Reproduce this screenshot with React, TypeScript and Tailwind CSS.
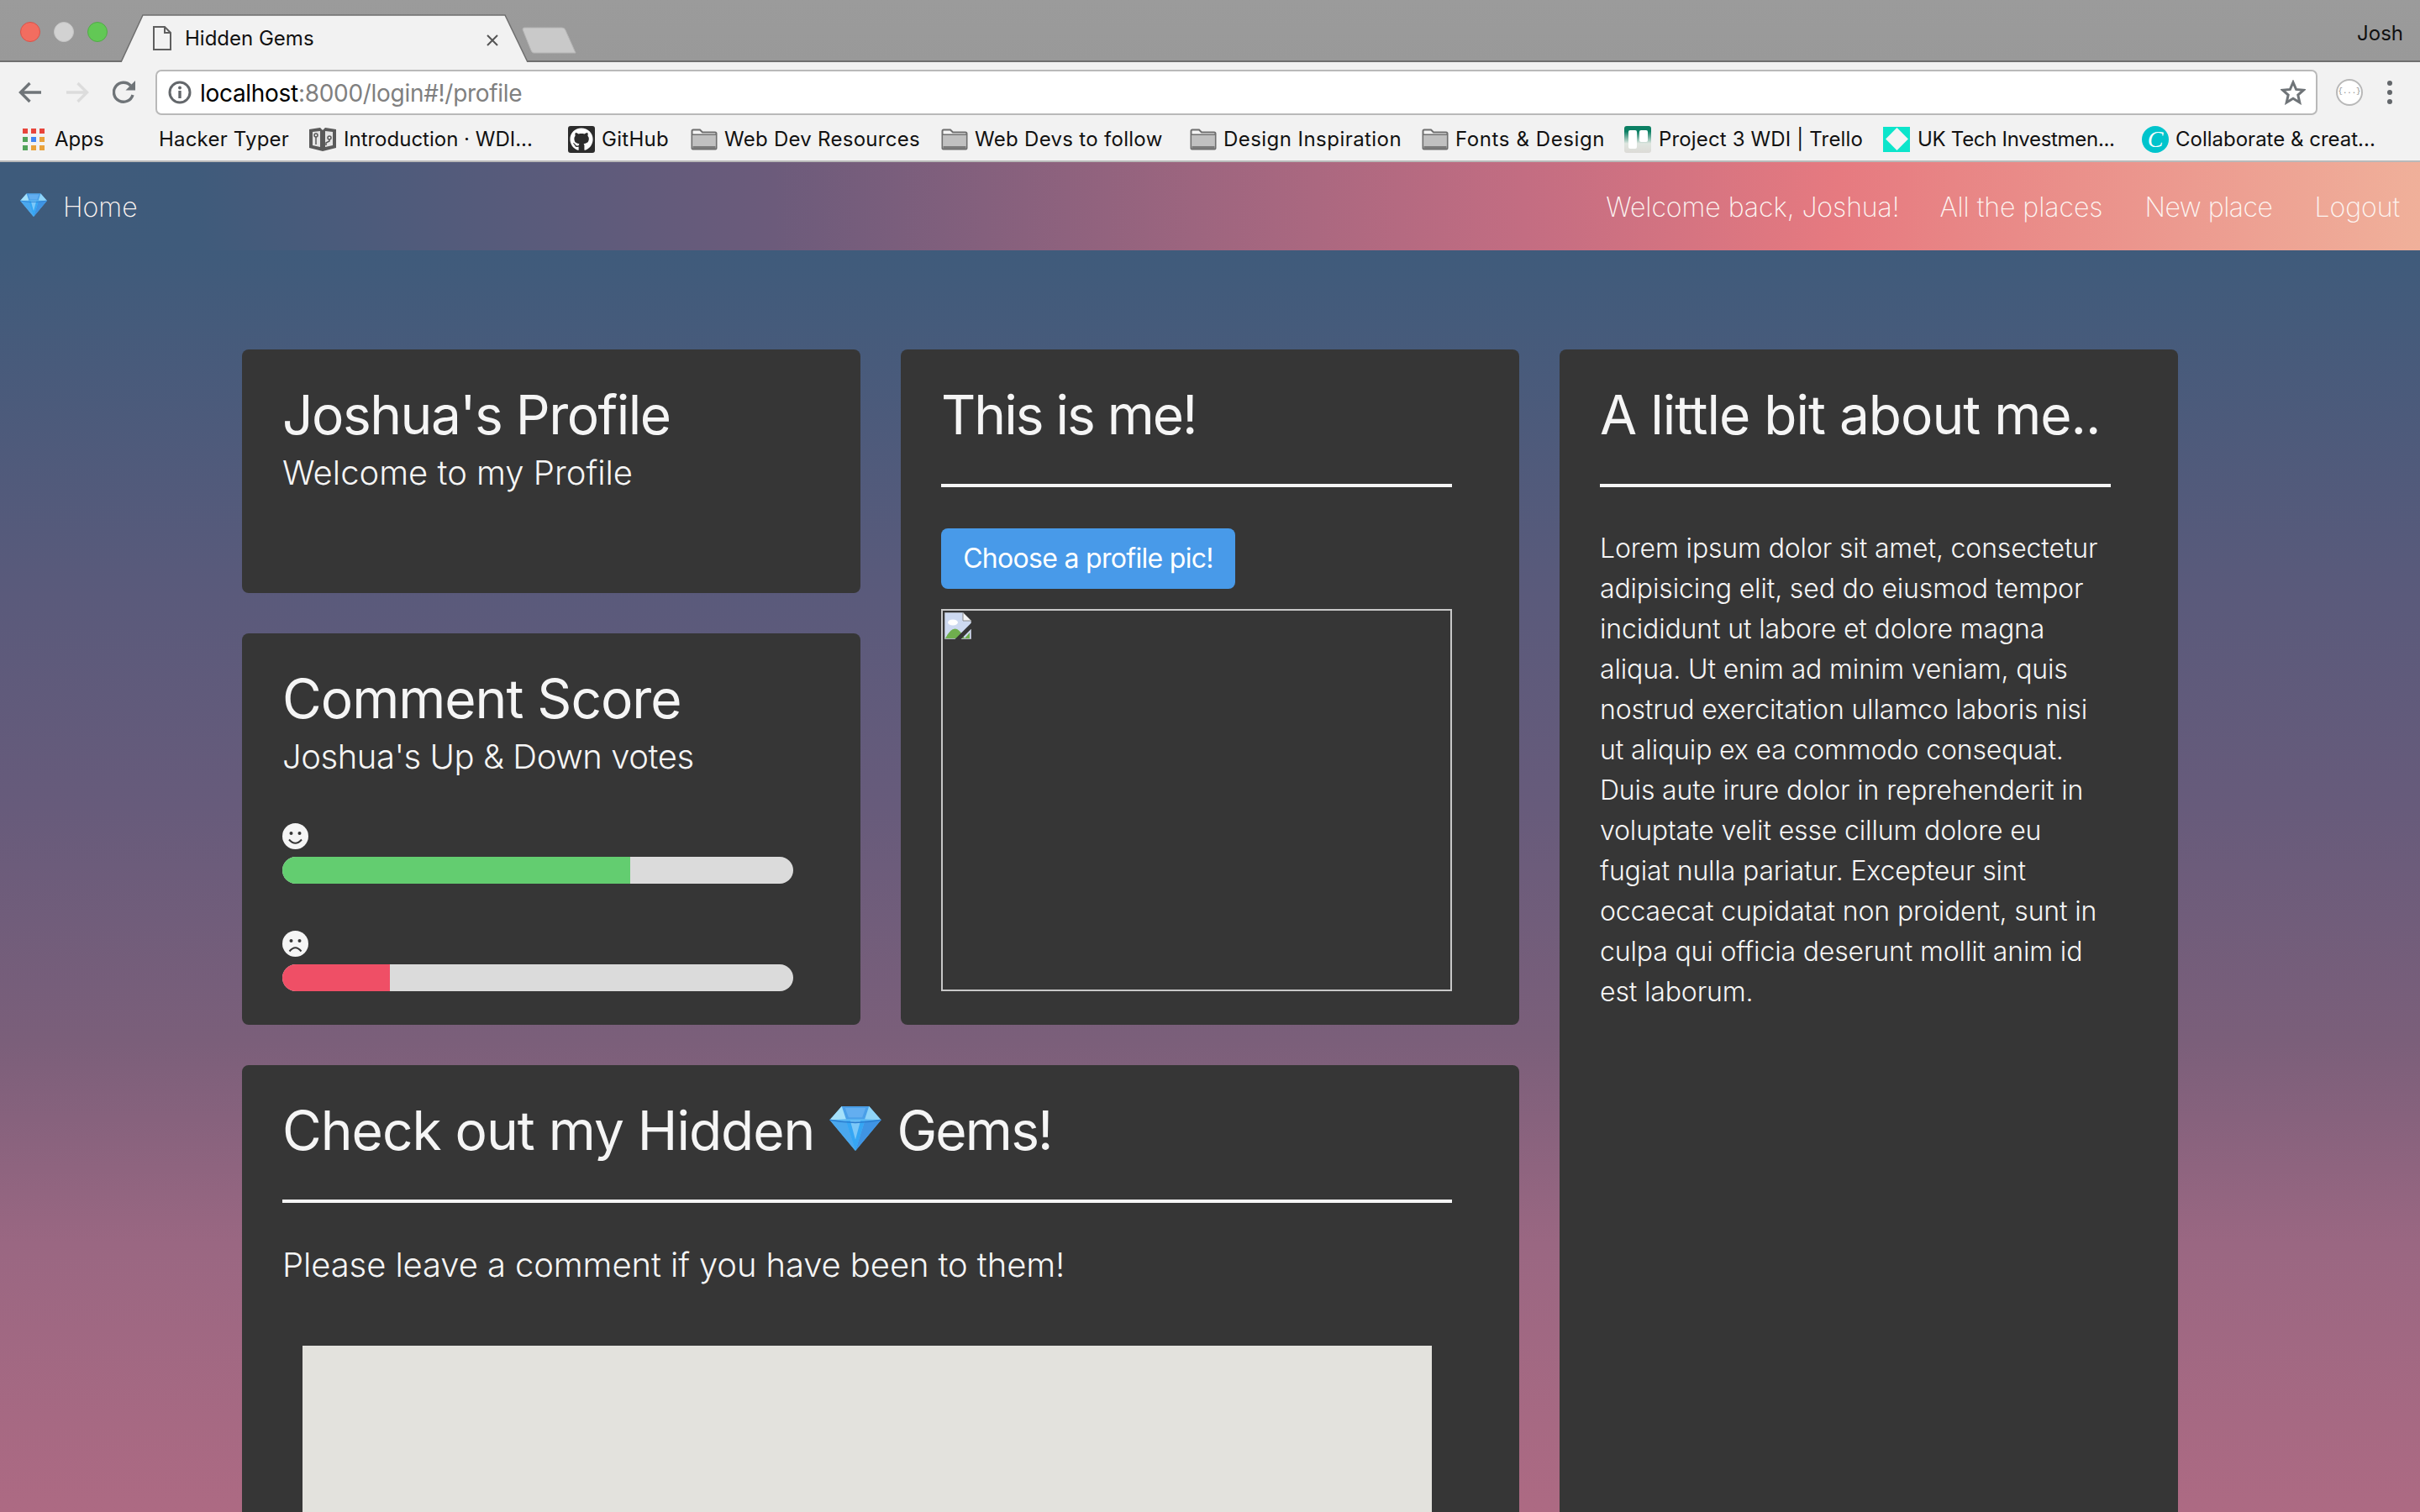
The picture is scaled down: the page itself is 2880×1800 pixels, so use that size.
import { FaGithub } from "react-icons/fa";

const bookmarkFont = "font-['Inter','Liberation_Sans',sans-serif] text-[24px] leading-[32px] text-[#111] whitespace-nowrap";
const quick = "font-['Inter','Lato',sans-serif]";

function Gem({ className }: { className: string }) {
  return (
    <svg viewBox="0 0 60 53" className={className}>
      <polygon points="14,1 46,1 60,17 30,53 0,17" fill="#5cb8f2" />
      <polygon points="14,1 46,1 41,16 19,16" fill="#4a9fe8" />
      <polygon points="18,3 42,3 38,14 22,14" fill="#63aef0" />
      <polygon points="14,1 19,16 0,17" fill="#a5e0fa" />
      <polygon points="46,1 41,16 60,17" fill="#8fd4f8" />
      <polygon points="0,17 19,18 30,53" fill="#4aa8ee" />
      <polygon points="60,17 41,18 30,53" fill="#3f94e4" />
      <polygon points="19,18 41,18 30,53" fill="#35a6f4" />
      <polygon points="24,18 36,18 30,40" fill="#7cc8f8" />
      <path d="M0 17 Q30 23 60 17" stroke="#2b7fd0" strokeWidth="1.5" fill="none" />
    </svg>
  );
}

function Folder() {
  return (
    <svg viewBox="0 0 32 26" className="w-[32px] h-[26px] shrink-0">
      <path d="M1.5 24V3q0-1.5 1.5-1.5h8l3 3h15q1.5 0 1.5 1.5v17.5q0 1-1 1H2.5q-1 0-1-1z" fill="#f4f4f4" stroke="#6f6f6f" strokeWidth="2" />
      <rect x="2.5" y="8" width="27" height="14" fill="#c0c0c0" />
      <rect x="2.5" y="21" width="27" height="3" fill="#7a7a7a" />
      <rect x="2" y="6.5" width="28" height="1.5" fill="#6f6f6f" />
    </svg>
  );
}

function Face({ sad }: { sad?: boolean }) {
  return (
    <svg viewBox="0 0 31 31" className="w-[31px] h-[31px] block">
      <circle cx="15.5" cy="15.5" r="15.5" fill="#f5f5f5" />
      <circle cx="10.5" cy="12" r="2" fill="#363636" />
      <circle cx="20.5" cy="12" r="2" fill="#363636" />
      {sad ? (
        <path d="M8.5 24.5Q15.5 16 22.5 24.5" stroke="#363636" strokeWidth="2" fill="none" />
      ) : (
        <path d="M8 19.5Q15.5 28 23 19.5" stroke="#363636" strokeWidth="2" fill="none" />
      )}
    </svg>
  );
}

function TabStrip() {
  return (
    <div className="h-[74px] shrink-0 flex bg-[linear-gradient(#9b9b9b,#999999)] border-b-2 border-[#6f6f6f]">
      <div className="flex items-center gap-[16px] pl-[24px] w-[144px] h-[76px] shrink-0">
        <span className="w-[24px] h-[24px] rounded-full bg-[#f26d60] border border-[#d9534a]" />
        <span className="w-[24px] h-[24px] rounded-full bg-[#d2d2d2] border border-[#c4c4c4]" />
        <span className="w-[24px] h-[24px] rounded-full bg-[#62c855] border border-[#52ab48]" />
      </div>
      <div className="relative w-[485px] h-[57px] mt-[17px] flex items-center shrink-0">
        <svg viewBox="0 0 485 57" className="absolute inset-0 w-[485px] h-[57px]">
          <path d="M0 57 L26 1 H457 L484 57" fill="#f2f2f2" stroke="#6f6f6f" strokeWidth="1.5" />
        </svg>
        <svg viewBox="0 0 22 29" className="relative ml-[38px] w-[22px] h-[29px] shrink-0">
          <path d="M1 1H14L21 8V28H1Z" fill="none" stroke="#5f5f5f" strokeWidth="2" />
          <path d="M14 1V8H21" fill="none" stroke="#5f5f5f" strokeWidth="2" />
        </svg>
        <span className="relative ml-[16px] font-['Inter',sans-serif] text-[24px] text-[#111] whitespace-nowrap">Hidden Gems</span>
        <svg viewBox="0 0 14 14" className="absolute left-[435px] top-[24px] w-[14px] h-[14px]">
          <path d="M1 1L13 13M13 1L1 13" stroke="#555" strokeWidth="2" />
        </svg>
      </div>
      <svg viewBox="0 0 66 32" className="w-[66px] h-[32px] mt-[32px] shrink-0 -ml-[8px]">
        <path d="M3 1H48Q51 1 52 4L64 31H14Q12 31 11 28L1 3Q1 1 3 1Z" fill="#c9c9c9" stroke="#b5b5b5" />
      </svg>
      <span className="ml-auto mr-[20px] mt-[24px] font-['Inter',sans-serif] text-[24px] leading-[32px] text-[#111]">Josh</span>
    </div>
  );
}

function Toolbar() {
  return (
    <div className="h-[63px] shrink-0 flex items-end bg-[#f2f2f2]">
      <div className="flex items-center w-[185px] h-[54px] shrink-0 pl-[22px]">
        <svg viewBox="0 0 28 26" className="w-[28px] h-[26px] shrink-0">
          <path d="M27 13H3M13.5 2L2.5 13L13.5 24" fill="none" stroke="#6f7478" strokeWidth="3.4" />
        </svg>
        <svg viewBox="0 0 28 26" className="w-[28px] h-[26px] shrink-0 ml-[28px]">
          <path d="M1 13H25M14.5 2L25.5 13L14.5 24" fill="none" stroke="#dcdcdc" strokeWidth="3.4" />
        </svg>
        <svg viewBox="0 0 28 28" className="w-[28px] h-[28px] shrink-0 ml-[28px]">
          <path d="M24 17A11.5 11.5 0 1 1 21.5 6" fill="none" stroke="#6f7478" strokeWidth="3.4" />
          <path d="M27 0V11.5H15.5Z" fill="#6f7478" />
        </svg>
      </div>
      <div className="w-[2573px] h-[54px] bg-white border-2 border-[#b9b9b9] rounded-[7px] flex items-center shrink-0 pl-[13px] pr-[12px]">
        <svg viewBox="0 0 28 28" className="w-[28px] h-[28px] shrink-0">
          <circle cx="14" cy="14" r="12" fill="none" stroke="#63676b" strokeWidth="3" />
          <circle cx="14" cy="8.5" r="2" fill="#63676b" />
          <rect x="12.3" y="12" width="3.4" height="9" fill="#63676b" />
        </svg>
        <span className="ml-[10px] pt-[2px] font-['Inter',sans-serif] text-[28px] leading-[40px] whitespace-nowrap tracking-[-0.3px]">
          <span className="text-black">localhost</span>
          <span className="text-[#808080]">:8000/login#!/profile</span>
        </span>
        <svg viewBox="0 0 30 30" className="ml-auto w-[30px] h-[30px] shrink-0">
          <path d="M15 3L18.6 11.4L27.5 12.2L20.8 18.1L22.8 27L15 22.3L7.2 27L9.2 18.1L2.5 12.2L11.4 11.4Z" fill="none" stroke="#6f7478" strokeWidth="3" />
        </svg>
      </div>
      <div className="flex items-center h-[54px] flex-1">
        <div className="ml-[22px] w-[32px] h-[32px] rounded-full bg-white border-2 border-[#b8b8b8] flex items-center justify-center font-['Liberation_Mono',monospace] text-[9px] text-[#888] whitespace-nowrap">
          {"{...}"}
        </div>
        <div className="ml-[29px] flex flex-col gap-[5px]">
          <span className="w-[6px] h-[6px] rounded-full bg-[#63676b]" />
          <span className="w-[6px] h-[6px] rounded-full bg-[#63676b]" />
          <span className="w-[6px] h-[6px] rounded-full bg-[#63676b]" />
        </div>
      </div>
    </div>
  );
}

function BookmarkBar() {
  return (
    <div className="h-[56px] shrink-0 flex items-center bg-[#f2f2f2] border-b-2 border-[#b9b9b9] pl-[27px] pt-[3px]">
      <svg viewBox="0 0 26 26" className="w-[26px] h-[26px] shrink-0">
        <rect x="0" y="0" width="6" height="6" fill="#e8453c" />
        <rect x="10" y="0" width="6" height="6" fill="#e8453c" />
        <rect x="20" y="0" width="6" height="6" fill="#e8453c" />
        <rect x="0" y="10" width="6" height="6" fill="#52a35a" />
        <rect x="10" y="10" width="6" height="6" fill="#4285f4" />
        <rect x="20" y="10" width="6" height="6" fill="#e9a23b" />
        <rect x="0" y="20" width="6" height="6" fill="#52a35a" />
        <rect x="10" y="20" width="6" height="6" fill="#e9a23b" />
        <rect x="20" y="20" width="6" height="6" fill="#e9a23b" />
      </svg>
      <span className={`${bookmarkFont} ml-[12px] w-[124px]`}>Apps</span>
      <span className={`${bookmarkFont} w-[179px] tracking-[0.2px]`}>Hacker Typer</span>
      <svg viewBox="0 0 32 28" className="w-[32px] h-[28px] shrink-0">
        <path d="M0 2L13 0L16 3L19 0L32 2V24L16 28L0 24Z" fill="#5a5a5a" />
        <path d="M4 5L13 4V23L4 21ZM28 5L19 4V23L28 21Z" fill="#e6e6e6" />
        <circle cx="8" cy="9" r="2" fill="none" stroke="#5a5a5a" strokeWidth="1.5" />
        <circle cx="24" cy="12" r="2" fill="none" stroke="#5a5a5a" strokeWidth="1.5" />
        <path d="M8 11V20M24 14V16L20 18V21" fill="none" stroke="#5a5a5a" strokeWidth="1.5" />
      </svg>
      <span className={`${bookmarkFont} ml-[9px] w-[267px]`}>Introduction · WDI...</span>
      <span className="w-[32px] h-[32px] shrink-0 rounded-[3px] bg-[#2c2c2c] flex items-center justify-center text-white text-[28px]">
        <FaGithub />
      </span>
      <span className={`${bookmarkFont} ml-[8px] w-[106px] tracking-[0.3px]`}>GitHub</span>
      <Folder />
      <span className={`${bookmarkFont} ml-[8px] w-[258px] tracking-[0.27px]`}>Web Dev Resources</span>
      <Folder />
      <span className={`${bookmarkFont} ml-[8px] w-[256px] tracking-[0.3px]`}>Web Devs to follow</span>
      <Folder />
      <span className={`${bookmarkFont} ml-[8px] w-[236px] tracking-[0.45px]`}>Design Inspiration</span>
      <Folder />
      <span className={`${bookmarkFont} ml-[8px] w-[201px] tracking-[0.6px]`}>Fonts & Design</span>
      <svg viewBox="0 0 32 32" className="w-[32px] h-[32px] shrink-0">
        <defs>
          <linearGradient id="trello" x1="0" y1="0" x2="0" y2="1">
            <stop offset="0.2" stopColor="#0b7f63" />
            <stop offset="0.65" stopColor="#dfe6e0" />
            <stop offset="1" stopColor="#dcdad6" />
          </linearGradient>
        </defs>
        <rect width="32" height="32" rx="3" fill="url(#trello)" />
        <rect x="5" y="5" width="10" height="22" rx="2" fill="#fff" />
        <rect x="18" y="5" width="10" height="14" rx="2" fill="#fff" />
      </svg>
      <span className={`${bookmarkFont} ml-[9px] w-[267px] tracking-[0.15px]`}>Project 3 WDI | Trello</span>
      <span className="w-[32px] h-[30px] shrink-0 bg-[#0ce5cb] flex items-center justify-center">
        <span className="w-[19px] h-[19px] bg-[#f4f4f4] rotate-45" />
      </span>
      <span className={`${bookmarkFont} ml-[9px] w-[267px] tracking-[-0.3px]`}>UK Tech Investmen...</span>
      <span className="w-[32px] h-[32px] shrink-0 rounded-full bg-[#00c4cc] flex items-center justify-center font-['Liberation_Serif',serif] italic text-[28px] leading-none text-white">
        C
      </span>
      <span className={`${bookmarkFont} ml-[8px]`}>Collaborate & creat...</span>
    </div>
  );
}

function Nav() {
  return (
    <nav className={`${quick} h-[105px] shrink-0 flex items-center font-extralight tracking-[-0.05px] pt-[3px] text-[32px] text-[#fdf5f2] bg-[linear-gradient(to_right,#3e5b7b_0%,#3f5b7b_8%,#6c5b7b_32%,#c36d82_63%,#e67a80_76%,#f0b09a_100%)]`}>
      <Gem className="ml-[24px] w-[32px] h-[28px] -mt-[7px] shrink-0" />
      <a className="ml-[19px] tracking-normal">Home</a>
      <a className="ml-auto">Welcome back, Joshua!</a>
      <a className="ml-[48px]">All the places</a>
      <a className="ml-[50px] tracking-[-0.5px]">New place</a>
      <a className="ml-[50px] mr-[24px]">Logout</a>
    </nav>
  );
}

const card = "bg-[#363636] rounded-[8px] pl-[48px] pr-[80px] pt-[38px] text-[#f5f5f5]";
const heading = "text-[64px] leading-[80px] font-normal whitespace-nowrap";
const subtitle = "text-[40px] leading-[50px] font-light whitespace-nowrap";
const rule = "mt-[42px] h-[4px] border-0 bg-[#f5f5f5]";

const about = [
  "Lorem ipsum dolor sit amet, consectetur",
  "adipisicing elit, sed do eiusmod tempor",
  "incididunt ut labore et dolore magna",
  "aliqua. Ut enim ad minim veniam, quis",
  "nostrud exercitation ullamco laboris nisi",
  "ut aliquip ex ea commodo consequat.",
  "Duis aute irure dolor in reprehenderit in",
  "voluptate velit esse cillum dolore eu",
  "fugiat nulla pariatur. Excepteur sint",
  "occaecat cupidatat non proident, sunt in",
  "culpa qui officia deserunt mollit anim id",
  "est laborum.",
];

export default function App() {
  return (
    <div className="h-[1800px] overflow-hidden flex flex-col">
      <TabStrip />
      <Toolbar />
      <BookmarkBar />
      <Nav />
      <main className={`${quick} flex-1 overflow-hidden pt-[118px] flex justify-center bg-[linear-gradient(#3f5b7b_0px,#5a5a7b_408px,#675b7b_662px,#7b5f7a_942px,#9a6782_1182px,#ad6a83_1502px)]`}>
        <div className="grid grid-cols-[736px_736px_736px] grid-rows-[290px_466px_600px] gap-[48px] shrink-0">
          <section className={card}>
            <h2 className={`${heading} tracking-[-1.5px]`}>Joshua's Profile</h2>
            <p className={`${subtitle} mt-[4px]`}>Welcome to my Profile</p>
          </section>

          <section className={`${card} col-start-2 row-start-1 row-span-2`}>
            <h2 className={`${heading} tracking-[-2px]`}>This is me!</h2>
            <hr className={rule} />
            <button className="mt-[49px] block w-[350px] h-[72px] rounded-[8px] bg-[#489ae9] font-['Inter',sans-serif] text-[32px] tracking-[-0.7px] text-white whitespace-nowrap">
              Choose a profile pic!
            </button>
            <div className="mt-[24px] h-[455px] border-2 border-[#c8c8c8] p-[2px]">
              <svg viewBox="0 0 32 32" className="w-[32px] h-[32px] block">
                <path d="M0 0H22L32 10V32H0Z" fill="#cdd9f0" stroke="#8a8a8a" />
                <path d="M22 0V10H32Z" fill="#f4f4f4" stroke="#8a8a8a" />
                <ellipse cx="10" cy="12" rx="6" ry="3.5" fill="#fff" />
                <path d="M1 31Q8 17 15 20Q20 23 24 31Z" fill="#6fae4e" />
                <path d="M24 31L30 24V31Z" fill="#6fae4e" />
                <path d="M14 34L34 14" stroke="#363636" strokeWidth="5" />
              </svg>
            </div>
          </section>

          <section className={`${card} col-start-3 row-start-1 row-span-3`}>
            <h2 className={`${heading} tracking-[-1px]`}>A little bit about me..</h2>
            <hr className={rule} />
            <p className="mt-[49px] text-[32px] leading-[48px] font-light tracking-[-0.15px] whitespace-nowrap">
              {about.map((line) => (
                <span key={line} className="block">{line}</span>
              ))}
            </p>
          </section>

          <section className={`${card} col-start-1 row-start-2`}>
            <h2 className={`${heading} tracking-[-1px]`}>Comment Score</h2>
            <p className={`${subtitle} mt-[4px] tracking-[-0.45px]`}>Joshua's Up & Down votes</p>
            <div className="mt-[54px]">
              <Face />
              <div className="mt-[9px] w-[608px] h-[32px] rounded-full bg-[#dbdbdb] overflow-hidden">
                <div className="h-full w-[414px] bg-[#63cd70]" />
              </div>
            </div>
            <div className="mt-[56px]">
              <Face sad />
              <div className="mt-[9px] w-[608px] h-[32px] rounded-full bg-[#dbdbdb] overflow-hidden">
                <div className="h-full w-[128px] bg-[#ef4f66]" />
              </div>
            </div>
          </section>

          <section className={`${card} col-span-2 col-start-1 row-start-3`}>
            <h2 className={`${heading} tracking-[-1px] flex items-center`}>
              Check out my Hidden
              <Gem className="ml-[18px] mr-[18px] w-[62px] h-[54px] -mt-[6px]" />
              <span className="tracking-[-1.8px]">Gems!</span>
            </h2>
            <hr className={rule} />
            <p className={`${subtitle} mt-[49px] tracking-[-0.1px]`}>Please leave a comment if you have been to them!</p>
            <div className="mt-[71px] ml-[24px] w-[1344px] h-[300px] bg-[#e3e2dd]" />
          </section>
        </div>
      </main>
    </div>
  );
}
